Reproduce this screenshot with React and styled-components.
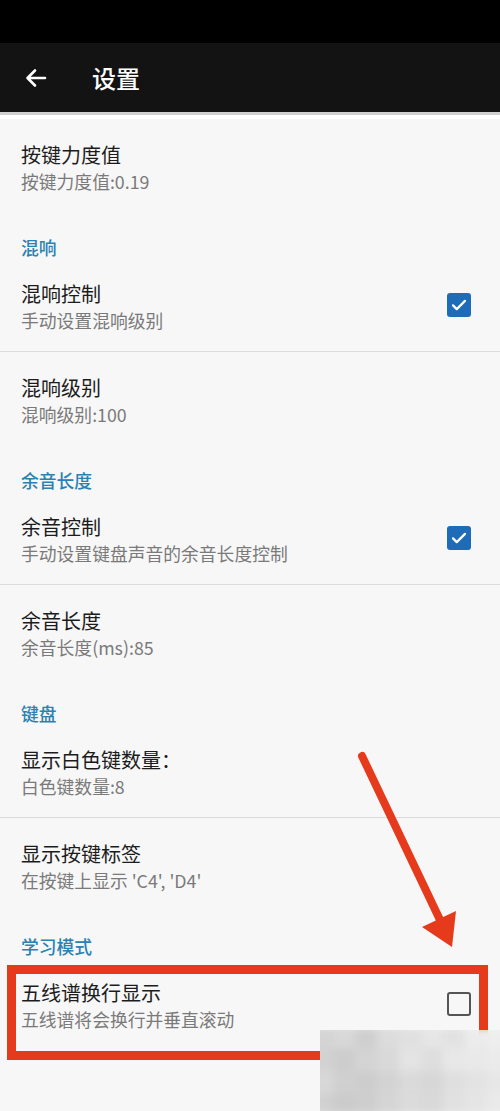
import React from 'react';
import styled, { createGlobalStyle } from 'styled-components';

const Global = createGlobalStyle`
  html, body {
    margin: 0;
    padding: 0;
    background: #f7f7f7;
  }
  body {
    font-family: "Noto Sans CJK SC", "Noto Sans", sans-serif;
  }
`;

const Page = styled.div`
  position: relative;
  width: 500px;
  height: 1111px;
  overflow: hidden;
  background: #f7f7f7;
`;

const StatusBar = styled.div`
  height: 43px;
  background: #000;
`;

const Toolbar = styled.div`
  height: 69px;
  background: #131313;
  display: flex;
  align-items: center;
  padding-left: 24px;
  gap: 44px;
  border-bottom: 3px solid #cfcfcf;
`;

const Title = styled.div`
  color: #fff;
  font-size: 24px;
  font-weight: 500;
  line-height: 1;
`;

const Gap = styled.div`
  height: 4px;
  background: #fff;
`;

const List = styled.div`
  display: flex;
  flex-direction: column;
`;

const Category = styled.div`
  height: 45px;
  box-sizing: border-box;
  padding: 24px 0 0 21px;
  font-size: 17.8px;
  line-height: 20px;
  font-weight: 500;
  color: #2a82b3;
`;

const Row = styled.div`
  position: relative;
  height: 94px;
  box-sizing: border-box;
  padding: 22px 29px 0 21px;
  display: flex;
  align-items: flex-start;
  justify-content: space-between;
  border-bottom: ${p => (p.$divider ? '1.5px solid #dcdcdc' : 'none')};
`;

const Texts = styled.div`
  display: flex;
  flex-direction: column;
`;

const RowTitle = styled.div`
  font-size: 20px;
  line-height: 28px;
  color: #1c1c1c;
`;

const RowSub = styled.div`
  font-size: 17.8px;
  line-height: 24px;
  color: #7a7a7a;
`;

const Box = styled.div`
  margin-top: 13px;
  width: 24px;
  height: 24px;
  box-sizing: border-box;
  border-radius: 3px;
  display: flex;
  align-items: center;
  justify-content: center;
  background: ${p => (p.$checked ? '#1e6cb8' : 'transparent')};
  border: ${p => (p.$checked ? 'none' : '2.5px solid #555')};
`;

const Highlight = styled.div`
  position: absolute;
  left: 7px;
  top: 8px;
  width: 481px;
  height: 95px;
  box-sizing: border-box;
  border: 9px solid #e63a1d;
  pointer-events: none;
`;

const Overlay = styled.svg`
  position: absolute;
  left: 0;
  top: 0;
  pointer-events: none;
`;

const MosaicClip = styled.div`
  position: absolute;
  left: 320px;
  top: 1030px;
  width: 180px;
  height: 81px;
  overflow: hidden;
`;

const Mosaic = styled.div`
  width: 100%;
  height: 100%;
  display: grid;
  grid-template-columns: repeat(9, 1fr);
  grid-template-rows: repeat(4, 1fr);
  filter: blur(4px);
  transform: scale(1.1);
`;

const Cell = styled.div`
  background: ${p => p.$c};
`;

const shades = [
  '#d4d4d4', '#d8d8d8', '#cfcfcf', '#dcdcdc', '#e0e0e0', '#e6e6e6', '#e2e2e2', '#ececec', '#eeeeee',
  '#d2d2d2', '#cdcdcd', '#d4d4d4', '#d9d9d9', '#e4e4e4', '#dedede', '#e8e8e8', '#e9e9e9', '#ebebeb',
  '#d8d8d8', '#d0d0d0', '#cdcdcd', '#d3d3d3', '#dadada', '#d7d7d7', '#dfdfdf', '#e3e3e3', '#e7e7e7',
  '#d1d1d1', '#cbcbcb', '#cecece', '#d5d5d5', '#dbdbdb', '#d9d9d9', '#e1e1e1', '#e5e5e5', '#eaeaea',
];

function Check({ checked }) {
  return (
    <Box $checked={checked}>
      {checked && (
        <svg width="18" height="18" viewBox="0 0 24 24">
          <path d="M4 12.5l5 5L20 6.5" fill="none" stroke="#fff" strokeWidth="3" strokeLinecap="round" strokeLinejoin="round" />
        </svg>
      )}
    </Box>
  );
}

function Pref({ title, sub, check, divider, highlight }) {
  return (
    <Row $divider={divider}>
      <Texts>
        <RowTitle>{title}</RowTitle>
        <RowSub>{sub}</RowSub>
      </Texts>
      {check !== undefined && <Check checked={check} />}
      {highlight && <Highlight />}
    </Row>
  );
}

export default function App() {
  return (
    <Page>
      <Global />
      <StatusBar />
      <Toolbar>
        <svg width="24" height="24" viewBox="0 0 24 24">
          <path d="M21 12H4M11 4.5L3.5 12l7.5 7.5" fill="none" stroke="#fff" strokeWidth="2.6" strokeLinecap="round" strokeLinejoin="round" />
        </svg>
        <Title>设置</Title>
      </Toolbar>
      <Gap />
      <List>
        <Pref title="按键力度值" sub="按键力度值:0.19" />
        <Category>混响</Category>
        <Pref title="混响控制" sub="手动设置混响级别" check divider />
        <Pref title="混响级别" sub="混响级别:100" />
        <Category>余音长度</Category>
        <Pref title="余音控制" sub="手动设置键盘声音的余音长度控制" check divider />
        <Pref title="余音长度" sub="余音长度(ms):85" />
        <Category>键盘</Category>
        <Pref title="显示白色键数量：" sub="白色键数量:8" divider />
        <Pref title="显示按键标签" sub="在按键上显示 'C4', 'D4'" />
        <Category>学习模式</Category>
        <Pref title="五线谱换行显示" sub="五线谱将会换行并垂直滚动" check={false} highlight />
      </List>
      <Overlay width="500" height="1111" viewBox="0 0 500 1111">
        <line x1="362" y1="756" x2="441" y2="922" stroke="#e63a1d" strokeWidth="8" strokeLinecap="round" />
        <polygon points="422,927 456,911 452,947" fill="#e63a1d" />
      </Overlay>
      <MosaicClip>
        <Mosaic>
          {shades.map((c, i) => (
            <Cell key={i} $c={c} />
          ))}
        </Mosaic>
      </MosaicClip>
    </Page>
  );
}
